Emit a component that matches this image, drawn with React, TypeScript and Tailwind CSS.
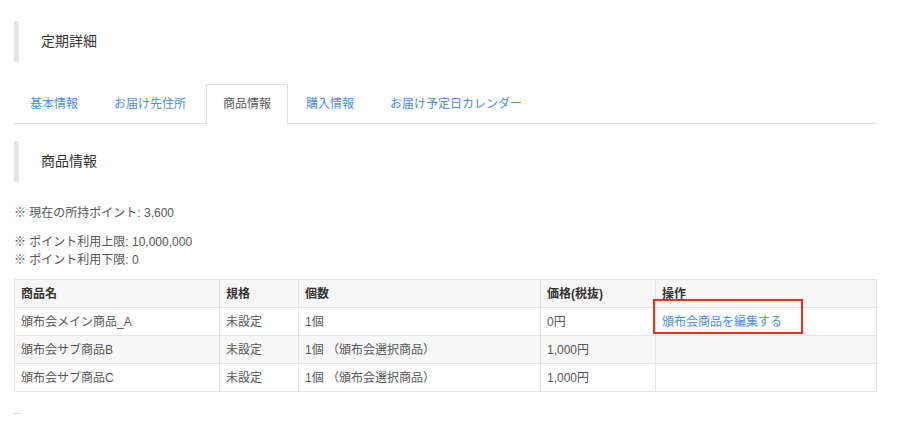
const tabs = ['基本情報', 'お届け先住所', '商品情報', '購入情報', 'お届け予定日カレンダー'];

const rows = [
  { name: '頒布会メイン商品_A', spec: '未設定', qty: '1個', price: '0円', link: true, striped: false },
  { name: '頒布会サブ商品B', spec: '未設定', qty: '1個 （頒布会選択商品）', price: '1,000円', link: false, striped: true },
  { name: '頒布会サブ商品C', spec: '未設定', qty: '1個 （頒布会選択商品）', price: '1,000円', link: false, striped: false },
];

function Heading({ title }: { title: string }) {
  return (
    <div className="flex h-[41px] items-center border-l-[5px] border-[#e6e6e6] pl-[22px] text-[14px] text-[#333]">
      {title}
    </div>
  );
}

export default function App() {
  return (
    <div
      className="relative h-[436px] w-[912px] overflow-hidden bg-white pl-[14px] pr-[36px] pt-[21px] text-[12px] text-[#555]"
      style={{ fontFamily: '"Liberation Sans", "Noto Sans CJK JP", sans-serif' }}
    >
      <Heading title="定期詳細" />

      <ul className="mt-[22px] flex border-b border-[#ddd]">
        {tabs.map((t) => {
          const active = t === '商品情報';
          return (
            <li
              key={t}
              className={
                active
                  ? '-mb-px mr-[2px] flex h-[40px] items-center border border-b-white border-[#ddd] bg-white px-4 text-[#555]'
                  : 'mr-[4px] flex h-[39px] items-center px-4 text-[#4a8de6]'
              }
            >
              {t}
            </li>
          );
        })}
      </ul>

      <div className="mt-[17px]">
        <Heading title="商品情報" />
      </div>

      <div className="mt-[22px] leading-[18px]">
        <p>※ 現在の所持ポイント: 3,600</p>
        <p className="mt-[11px]">※ ポイント利用上限: 10,000,000</p>
        <p>※ ポイント利用下限: 0</p>
      </div>

      <table className="mt-[10px] w-full table-fixed border-collapse border border-[#e4e4e4]">
        <colgroup>
          <col className="w-[205px]" />
          <col className="w-[79px]" />
          <col className="w-[242px]" />
          <col className="w-[115px]" />
          <col className="w-[221px]" />
        </colgroup>
        <thead>
          <tr className="bg-[#f7f7f7] text-left font-semibold text-[#333]">
            {['商品名', '規格', '個数', '価格(税抜)', '操作'].map((h) => (
              <th key={h} className="h-[28px] border border-[#e4e4e4] px-[6px] font-semibold">
                {h}
              </th>
            ))}
          </tr>
        </thead>
        <tbody>
          {rows.map((r) => (
            <tr key={r.name} className={r.striped ? 'bg-[#f7f7f7]' : 'bg-white'}>
              <td className="h-[28px] border border-[#e4e4e4] px-[6px]">{r.name}</td>
              <td className="border border-[#e4e4e4] px-[6px]">{r.spec}</td>
              <td className="border border-[#e4e4e4] px-[6px]">{r.qty}</td>
              <td className="border border-[#e4e4e4] px-[6px]">{r.price}</td>
              <td className="border border-[#e4e4e4] px-[6px]">
                {r.link && <a className="text-[#4a8de6]">頒布会商品を編集する</a>}
              </td>
            </tr>
          ))}
        </tbody>
      </table>

      <div className="mt-[21px] h-px w-[6px] bg-[#ddd]" />

      <div className="absolute left-[653px] top-[299px] h-[35px] w-[150px] border-2 border-[#f42b1b]" />
    </div>
  );
}
